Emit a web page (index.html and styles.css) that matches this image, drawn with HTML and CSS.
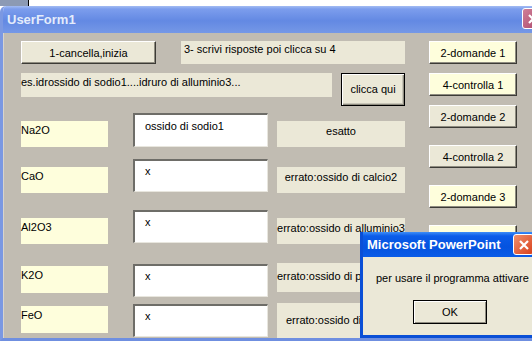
FILE: index.html
```html
<!DOCTYPE html>
<html lang="it">
<head>
    <meta charset="UTF-8">
    <title>UserForm1</title>
    <link rel="stylesheet" href="styles.css">
</head>
<body>
    <div class="desk">
        <div class="desk-left"></div>
    </div>

    <div class="window">
        <div class="titlebar">
            <span class="title">UserForm1</span>
            <span class="close-btn inactive">
                <svg width="12" height="12" viewBox="0 0 12 12"><path d="M2 2 L10 10 M10 2 L2 10" stroke="#fff" stroke-width="2.2"/></svg>
            </span>
        </div>

        <div class="form">
            <div class="main">
                <div class="top-row">
                    <div class="btn btn-start">1-cancella,inizia</div>
                    <div class="lbl lbl-hint">3- scrivi risposte poi clicca su 4</div>
                </div>

                <div class="example-row">
                    <div class="lbl lbl-example">es.idrossido di sodio1....idruro di alluminio3...</div>
                    <div class="btn btn-default">clicca qui</div>
                </div>

                <div class="questions">
                    <div class="q-row">
                        <div class="formula">Na2O</div>
                        <div class="answer">ossido di sodio1</div>
                        <div class="result">esatto</div>
                    </div>
                    <div class="q-row">
                        <div class="formula">CaO</div>
                        <div class="answer">x</div>
                        <div class="result">errato:ossido di calcio2</div>
                    </div>
                    <div class="q-row">
                        <div class="formula">Al2O3</div>
                        <div class="answer">x</div>
                        <div class="result">errato:ossido di alluminio3</div>
                    </div>
                    <div class="q-row">
                        <div class="formula">K2O</div>
                        <div class="answer">x</div>
                        <div class="result">errato:ossido di p</div>
                    </div>
                    <div class="q-row">
                        <div class="formula">FeO</div>
                        <div class="answer">x</div>
                        <div class="result">errato:ossido di</div>
                    </div>
                </div>
            </div>

            <div class="side">
                <div class="btn yellow">2-domande 1</div>
                <div class="btn yellow">4-controlla 1</div>
                <div class="btn">2-domande 2</div>
                <div class="btn">4-controlla 2</div>
                <div class="btn yellow">2-domande 3</div>
                <div class="btn yellow"></div>
            </div>
        </div>
    </div>

    <!-- messaggio sopra il form -->
    <div class="msgbox">
        <div class="msg-title">
            <span class="title">Microsoft PowerPoint</span>
            <span class="close-btn active">
                <svg width="12" height="12" viewBox="0 0 12 12"><path d="M2 2 L10 10 M10 2 L2 10" stroke="#fff" stroke-width="2.2"/></svg>
            </span>
        </div>
        <div class="msg-body">
            <p class="msg-text">per usare il programma attivare</p>
            <div class="btn btn-ok">OK</div>
        </div>
    </div>
</body>
</html>
```

FILE: styles.css
```css
body {
    margin: 0;
    width: 532px;
    height: 344px;
    overflow: hidden;
    position: relative;
    background: #fff;
    font-family: 'Liberation Sans', Arial, sans-serif;
    font-size: 11px;
    color: #000;
}

.desk {
    height: 6px;
    display: flex;
}

.desk-left {
    width: 28px;
    background: #8c9ab4;
    border-right: 1px solid #000;
}

.window {
    width: 548px;
    border-left: 3px solid #7b98e2;
    border-bottom: 3px solid #6f8fe0;
    border-top-left-radius: 6px;
    overflow: hidden;
}

.titlebar {
    height: 27px;
    display: flex;
    align-items: center;
    justify-content: space-between;
    padding-left: 4px;
    background: linear-gradient(#a3bcf2 0, #7c9ded 3px, #6389e3 55%, #7598e6 100%);
}

.title {
    font-size: 13px;
    font-weight: bold;
    color: #e4ecfb;
}

.close-btn {
    width: 21px;
    height: 21px;
    box-sizing: border-box;
    border: 1px solid #fff;
    border-radius: 3px;
    display: flex;
    align-items: center;
    justify-content: center;
}

.close-btn.inactive {
    background: linear-gradient(135deg, #d07f98, #a9476a);
    margin-right: 8px;
    margin-top: -2px;
}

.close-btn.active {
    background: linear-gradient(135deg, #f0906c, #d8401c);
}

.form {
    height: 305px;
    background: #c1bcb2;
    display: flex;
    padding: 8px 0 0 17px;
    box-sizing: border-box;
    border-left: 1px solid #d8d4cc;
}

.main {
    width: 384px;
}

.lbl {
    background: #ebe8d7;
    box-sizing: border-box;
}

.btn {
    box-sizing: border-box;
    display: flex;
    align-items: center;
    justify-content: center;
    background: #ebe8d7;
    border-top: 1px solid #fff;
    border-left: 1px solid #fff;
    border-right: 1px solid #3c3b36;
    border-bottom: 1px solid #3c3b36;
    box-shadow: inset -1px -1px 0 #8f8c80;
}

.btn.yellow {
    background: #fefedc;
}

.top-row {
    display: flex;
    gap: 25px;
    height: 23px;
}

.btn-start {
    width: 135px;
}

.lbl-hint {
    width: 224px;
    padding: 2px 0 0 3px;
}

.example-row {
    display: flex;
    align-items: flex-start;
    gap: 9px;
    margin-top: 9px;
}

.lbl-example {
    width: 311px;
    height: 24px;
    padding-top: 3px;
}

.btn-default {
    width: 64px;
    height: 33px;
    border: 1px solid #000;
    box-shadow: inset 1px 1px 0 #fff, inset -1px -1px 0 #8f8c80, inset -2px -2px 0 #c8c5b8;
    padding-bottom: 2px;
}

.questions {
    margin-top: 7px;
}

.q-row {
    display: flex;
    align-items: flex-start;
}

.q-row + .q-row {
    margin-top: 12px;
}

.q-row:nth-child(3) {
    margin-top: 17px;
}

.q-row:nth-child(4) {
    margin-top: 20px;
}

.q-row:nth-child(5) {
    margin-top: 7px;
}

.formula {
    width: 87px;
    height: 26px;
    margin-top: 8px;
    padding-top: 3px;
    box-sizing: border-box;
    background: #fefedc;
}

.answer {
    width: 135px;
    height: 33px;
    margin-left: 25px;
    padding: 4px 0 0 10px;
    box-sizing: border-box;
    background: #fff;
    border-top: 2px solid #6e6d68;
    border-left: 2px solid #6e6d68;
    border-right: 1px solid #e8e6de;
    border-bottom: 1px solid #e8e6de;
}

.q-row:first-child .answer {
    height: 34px;
    padding-top: 5px;
}

.result {
    width: 128px;
    height: 26px;
    margin-top: 8px;
    margin-left: 9px;
    padding-top: 4px;
    box-sizing: border-box;
    background: #ebe8d7;
    text-align: center;
    white-space: nowrap;
}

.q-row:nth-child(4) .formula,
.q-row:nth-child(5) .formula {
    margin-top: 2px;
    height: 27px;
}

.q-row:nth-child(4) .result {
    margin-top: -1px;
    height: 29px;
    padding-top: 7px;
    text-align: left;
}

.q-row:nth-child(5) .result {
    margin-top: -1px;
    height: 35px;
    padding: 11px 0 0 9px;
    text-align: left;
}

.side {
    width: 88px;
    margin-left: 24px;
    display: flex;
    flex-direction: column;
}

.side .btn {
    height: 23px;
}

.side .btn + .btn {
    margin-top: 9px;
}

.side .btn:nth-child(n+4) {
    margin-top: 17px;
}

.msgbox {
    position: absolute;
    left: 360px;
    top: 232px;
    width: 190px;
    height: 106px;
    box-sizing: border-box;
    border-left: 3px solid #0a4fd6;
    border-bottom: 3px solid #0a4fd6;
    background: #ebe8d7;
    display: flex;
    flex-direction: column;
}

.msg-title {
    height: 25px;
    display: flex;
    align-items: center;
    justify-content: space-between;
    padding-left: 4px;
    background: linear-gradient(#3d8ef8 0, #0b5ce9 4px, #0553df 60%, #0a5ce8 100%);
}

.msg-title .title {
    color: #fff;
}

.msg-title .close-btn {
    margin-left: auto;
    margin-right: 16px;
}

.msg-body {
    flex: 1;
    display: flex;
    flex-direction: column;
    align-items: flex-start;
}

.msg-text {
    margin: 15px 0 0 13px;
    font-size: 11px;
    white-space: nowrap;
}

.btn-ok {
    width: 74px;
    height: 24px;
    margin: 16px 0 0 50px;
    border: 1px solid #000;
    box-shadow: inset 1px 1px 0 #fff, inset -1px -1px 0 #8f8c80;
}
```
